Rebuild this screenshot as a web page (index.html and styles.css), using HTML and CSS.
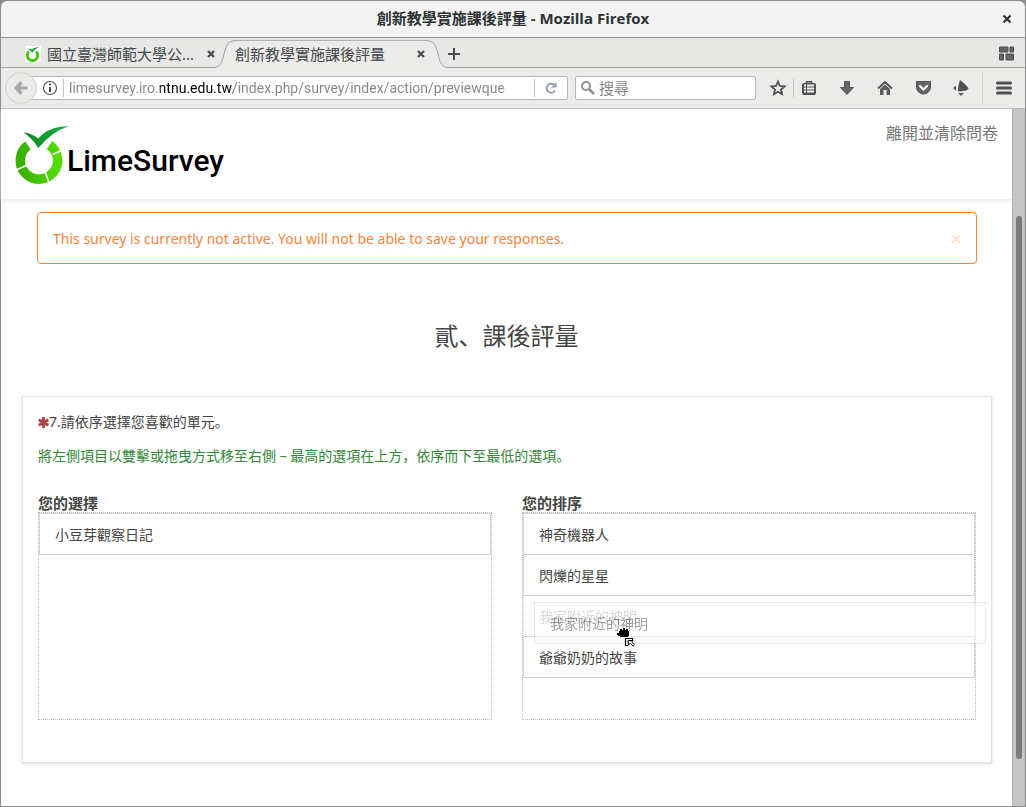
FILE: index.html
```html
<!DOCTYPE html>
<html lang="zh">
<head>
<meta charset="utf-8">
<title>創新教學實施課後評量</title>
<link rel="stylesheet" href="styles.css">
</head>
<body>
<div class="window">
  <header class="titlebar">
    <span class="titlebar-text">創新教學實施課後評量 - Mozilla Firefox</span>
    <button class="window-close" aria-label="關閉視窗"><svg width="10" height="10" viewBox="0 0 10 10"><path d="M1.500 1.500L8.500 8.500M8.500 1.500L1.500 8.500" stroke="#2e3436" stroke-width="2.200"/></svg></button>
  </header>

  <nav class="tabstrip" aria-label="分頁">
    <div class="tab">
      <svg class="favicon" width="16" height="16" viewBox="0 0 16 16"><rect width="16" height="16" fill="#fff"/><path d="M4 5.500A5.200 5.200 0 1 0 11 5.500" fill="none" stroke="#3fc400" stroke-width="2.700"/><path d="M2.500 2.500L7.500 6.500Q10 2 15 1Q9 1 7 3.500Z" fill="#149a3c"/></svg>
      <span class="tab-title">國立臺灣師範大學公...</span>
      <button class="tab-close" aria-label="關閉分頁"><svg width="8" height="8" viewBox="0 0 8 8"><path d="M1 1L7 7M7 1L1 7" stroke="#4a4d4e" stroke-width="2.200"/></svg></button>
    </div>
    <div class="tab-active">
      <svg class="tab-edge" width="24" height="30" viewBox="0 0 24 30"><path d="M0 29.500C6 29.500 8 27 10 20C13 9 13 2.500 24 2.500V30H0Z" fill="#ebebe9"/><path d="M0 29.500C6 29.500 8 27 10 20C13 9 13 2.500 24 2.500" fill="none" stroke="#a0a4ab"/></svg>
      <div class="tab-body">
        <span class="tab-title">創新教學實施課後評量</span>
        <button class="tab-close" aria-label="關閉分頁"><svg width="8" height="8" viewBox="0 0 8 8"><path d="M1 1L7 7M7 1L1 7" stroke="#4a4d4e" stroke-width="2.200"/></svg></button>
      </div>
      <svg class="tab-edge" width="24" height="30" viewBox="0 0 24 30"><path d="M24 29.500C18 29.500 16 27 14 20C11 9 11 2.500 0 2.500V30H24Z" fill="#ebebe9"/><path d="M24 29.500C18 29.500 16 27 14 20C11 9 11 2.500 0 2.500" fill="none" stroke="#a0a4ab"/></svg>
    </div>
    <button class="icon-new" aria-label="新分頁"><svg width="12" height="12" viewBox="0 0 12 12"><path d="M6 0V12M0 6H12" stroke="#4a4d4e" stroke-width="2"/></svg></button>
    <button class="icon-groups" aria-label="分頁群組"><svg width="15" height="15" viewBox="0 0 15 15"><path d="M.500 1H9V6H.500ZM11 1H14.500V6H11ZM.500 8H4.500V14H.500ZM7 8H14.500V14H7Z" fill="#666" stroke="#4c4c4c"/></svg></button>
  </nav>

  <div class="toolbar">
    <div class="location">
      <button class="back" aria-label="上一頁"><svg width="14" height="14" viewBox="0 0 14 14"><path d="M7.500 1.500L2 7L7.500 12.500M3 7H13.500" fill="none" stroke="#a6a6a6" stroke-width="3.200"/></svg></button>
      <div class="url-field">
        <svg width="16" height="16" viewBox="0 0 16 16"><circle cx="8" cy="8" r="6.500" fill="none" stroke="#5a5a5a" stroke-width="1.200"/><path d="M8 3.800V5.600M8 7V12" stroke="#4a4a4a" stroke-width="2"/></svg>
        <span class="rule"></span>
        <input class="url" type="text" aria-label="網址" value="limesurvey.iro.ntnu.edu.tw/index.php/survey/index/action/previewque">
        <span class="rule"></span>
        <button class="reload" aria-label="重新載入"><svg width="14" height="14" viewBox="0 0 14 14"><path d="M10.800 9.800A4.500 4.500 0 1 1 10.200 4" fill="none" stroke="#93a1b1" stroke-width="2"/><path d="M12.500 1V6.500H7Z" fill="#93a1b1"/></svg></button>
      </div>
    </div>
    <div class="search">
      <svg width="16" height="16" viewBox="0 0 16 16"><circle cx="6" cy="6" r="4" fill="none" stroke="#929292" stroke-width="2"/><path d="M9 9L14 14" stroke="#929292" stroke-width="2.800"/></svg>
      <input class="search-input" type="text" aria-label="搜尋" placeholder="搜尋">
    </div>
    <div class="tools">
      <button class="tool-star" aria-label="書籤"><svg width="18" height="18" viewBox="0 0 18 18"><path d="M9 2.500L10.900 7L15.600 7.400L12 10.500L13.100 15.200L9 12.700L4.900 15.200L6 10.500L2.400 7.400L7.100 7Z" fill="none" stroke="#505050" stroke-width="1.800"/></svg></button>
      <span class="rule"></span>
      <button class="tool" aria-label="書籤清單"><svg width="16" height="16" viewBox="0 0 16 16"><path d="M5.500 3V1.700H10.500V3" fill="none" stroke="#505050" stroke-width="1.600"/><rect x="2" y="4" width="12" height="10" rx="1" fill="#505050" stroke="#505050" stroke-width="2"/><path d="M3 5.500H5M6 5.500H13M3 8.500H5M6 8.500H13M3 11.500H5M6 11.500H13" stroke="#f4f4f4" stroke-width="1.800"/></svg></button>
      <button class="tool" aria-label="下載"><svg width="16" height="16" viewBox="0 0 16 16"><path d="M5.500 1.500H10.500V7.500H14.500L8 14.500L1.500 7.500H5.500Z" fill="#666" stroke="#505050" stroke-linejoin="round"/></svg></button>
      <button class="tool" aria-label="首頁"><svg width="16" height="16" viewBox="0 0 16 16"><path d="M1 8.500L8 2L15 8.500" fill="none" stroke="#505050" stroke-width="1.800"/><path d="M3 9L8 4.500L13 9V15H9.500V10H6.500V15H3Z" fill="#5d5d5d"/></svg></button>
      <button class="tool" aria-label="Pocket"><svg width="17" height="16" viewBox="0 0 17 16"><path d="M1.500 1.500H15.500V7A7 7 0 0 1 1.500 7Z" fill="#666" stroke="#505050"/><path d="M5 6L8.500 9.500L12 6" fill="none" stroke="#fff" stroke-width="2" stroke-linecap="round"/></svg></button>
      <button class="tool" aria-label="附加元件"><svg width="18" height="18" viewBox="0 0 18 18"><path d="M8 1Q12 4 16.500 9Q17 12 6.500 12.500Q5 10 8 1Z" fill="#505050"/><path d="M1 9L4 6.500V12ZM6 14H12L9 17Z" fill="#606060"/></svg></button>
      <span class="rule-tall"></span>
      <button class="tool" aria-label="選單"><svg width="16" height="14" viewBox="0 0 16 14"><path d="M1.500 2H14.500M1.500 7H14.500M1.500 12H14.500" stroke="#505050" stroke-width="3" stroke-linecap="round"/></svg></button>
    </div>
  </div>

  <div class="viewport">
    <main class="page">
      <div class="survey-nav">
        <svg class="logo" width="212" height="60" viewBox="0 0 212 60" role="img" aria-label="LimeSurvey">
          <defs>
            <linearGradient id="ring"><stop offset="0" stop-color="#38b000"/><stop offset="1" stop-color="#54dc00"/></linearGradient>
            <linearGradient id="leaf"><stop offset="0" stop-color="#108a1c"/><stop offset="1" stop-color="#1aad4d"/></linearGradient>
          </defs>
          <path d="M14 19.300A18.700 18.700 0 1 0 35.500 19" fill="none" stroke="url(#ring)" stroke-width="9.500"/>
          <path d="M2 43.900L13 39.200M35.500 58L31.200 46M38.500 28.600L49 24" stroke="#fff" stroke-width="1.600"/>
          <path d="M9.300 6.300Q18 7.500 24.500 12.500Q34 .500 54.700 .300Q38 5.500 24.300 22Q18 12 9.300 6.300Z" fill="url(#leaf)"/>
          <text class="logo-text" x="53" y="45">LimeSurvey</text>
        </svg>
        <a class="exit" href="#">離開並清除問卷</a>
      </div>
      <div class="alert" role="alert">
        <span>This survey is currently not active. You will not be able to save your responses.</span>
        <button class="alert-close" aria-label="關閉"><svg width="10" height="10" viewBox="0 0 10 10"><path d="M1 1L9 9M9 1L1 9" stroke="#fde3d0" stroke-width="2.200"/></svg></button>
      </div>
      <h1 class="group-title">貳、課後評量</h1>
      <section class="question">
        <p class="question-text"><svg class="required" width="11" height="11" viewBox="0 0 11 11"><path d="M5.500 0V11M.700 2.700L10.300 8.300M10.300 2.700L.700 8.300" stroke="#ab4642" stroke-width="2.800"/></svg>7.請依序選擇您喜歡的單元。</p>
        <p class="question-help">將左側項目以雙擊或拖曳方式移至右側 – 最高的選項在上方，依序而下至最低的選項。</p>
        <div class="ranking">
          <div class="column">
            <h2 class="column-title">您的選擇</h2>
            <ul class="list">
              <li class="item">小豆芽觀察日記</li>
            </ul>
          </div>
          <div class="column">
            <h2 class="column-title">您的排序</h2>
            <ul class="list">
              <li class="item">神奇機器人</li>
              <li class="item">閃爍的星星</li>
              <li class="slot">
                <div class="item placeholder">我家附近的神明</div>
                <div class="item dragged">我家附近的神明</div>
                <svg class="cursor" width="20" height="20" viewBox="0 0 20 20"><path d="M0 5H2V3H3V1H5V2H6V0H8V2H9V1H11V3H12V8H11V9H3V8H1V7H0Z" fill="#000"/><path d="M8.500 10.500H15.500V17.500H8.500Z" fill="#fff"/><path d="M15.500 12V10.500H8.500V17.500H11" fill="none" stroke="#000" stroke-width="1.200"/><path d="M11 12.500H16L14.700 14L17.500 16.800L16.100 18.200L13.300 15.400L11.500 17Z" fill="#fff" stroke="#000"/></svg>
              </li>
              <li class="item">爺爺奶奶的故事</li>
            </ul>
          </div>
        </div>
      </section>
    </main>
    <div class="scrollbar"><div class="thumb"></div></div>
  </div>
</div>
</body>
</html>
```
FILE: styles.css
```css
* { box-sizing: border-box; }

body {
  margin: 0;
  padding: 1px;
  background: #8c8c8c;
  color: #444;
  font-family: "Noto Sans", "Noto Sans CJK SC", sans-serif;
  font-size: 14px;
}

button {
  display: flex;
  align-items: center;
  justify-content: center;
  padding: 0;
  border: 0;
  background: none;
}

svg { display: block; flex: none; }

.window {
  display: flex;
  flex-direction: column;
  min-height: calc(100vh - 2px);
}

.titlebar {
  display: grid;
  grid-template-columns: 36px 1fr 36px;
  height: 37px;
  border-bottom: 1px solid #8f8f8c;
  border-radius: 6px 6px 0 0;
  background: #f3f3f3;
}

.titlebar-text {
  grid-column: 2;
  align-self: center;
  color: #2e3436;
  font-family: "Open Sans", "Noto Sans CJK TC", sans-serif;
  font-size: 15px;
  font-weight: 700;
  line-height: 20px;
  padding-bottom: 2px;
  text-align: center;
}

.tabstrip {
  display: flex;
  height: 30px;
  background: linear-gradient(#a2a2a0, #a2a2a0) bottom / 100% 1px no-repeat #e7e7e5;
}

.tab {
  display: flex;
  align-items: center;
  width: 212px;
  padding-top: 1px;
  padding-left: 24px;
}

.tab-title {
  flex: 1;
  margin-left: 6px;
  color: #42474a;
  font-size: 15px;
  line-height: 24px;
  white-space: nowrap;
}

.tab-close { width: 16px; height: 16px; }
.tab .tab-close { margin-right: -6px; }

.tab-active {
  display: flex;
  width: 236px;
}

.tab-body {
  display: flex;
  flex: 1;
  align-items: center;
  margin-top: 2px;
  padding-bottom: 2px;
  border-top: 1px solid #b0b3b8;
  background: #ebebe9;
}

.tab-body .tab-title { margin-left: -2px; }
.tab-body .tab-close { margin-right: -4px; }

.icon-new { width: 12px; margin-left: -1px; padding-top: 2px; }

.icon-groups {
  width: 15px;
  margin-right: 11px;
  margin-left: auto;
}

.toolbar {
  display: flex;
  align-items: center;
  height: 41px;
  padding: 0 2px 0 4px;
  border-bottom: 1px solid #b4b4b1;
  background: #ebebe9;
}

.location {
  display: flex;
  flex: 1;
  align-items: center;
  min-width: 0;
}

.back {
  z-index: 1;
  flex: none;
  width: 32px;
  height: 32px;
  margin-right: -14px;
  border: 1px solid #cfcfcc;
  border-radius: 50%;
  background: #ebebe9;
}

.url-field {
  display: flex;
  flex: 1;
  align-items: center;
  min-width: 0;
  height: 24px;
  padding-left: 18px;
  border: 1px solid #b6b6b3;
  border-radius: 2px;
  background: #fff;
}

.rule {
  flex: none;
  width: 1px;
  height: 18px;
  background: #c4c4c2;
}

.url-field svg + .rule { margin-left: 5px; }

.url {
  flex: 1;
  min-width: 0;
  height: 22px;
  margin: 0 24px 0 5px;
  padding: 0;
  border: 0;
  background: linear-gradient(90deg, #858585 91px, #000 91px, #000 164px, #858585 164px, #858585 98%, transparent);
  background-clip: text;
  color: transparent;
  font-family: Roboto, sans-serif;
  font-size: 14px;
}

.reload { width: 32px; height: 22px; }

.search {
  display: flex;
  align-items: center;
  width: 181px;
  height: 24px;
  margin-left: 7px;
  padding-left: 4px;
  border: 1px solid #b6b6b3;
  border-radius: 2px;
  background: #fff;
}

.search-input {
  width: 100%;
  margin-left: 3px;
  padding: 0;
  border: 0;
  background: none;
  font-family: "Noto Sans", "Noto Sans CJK TC", sans-serif;
  font-size: 15px;
  line-height: 20px;
}

.search-input::placeholder { color: #858585; }

.tools {
  display: flex;
  align-items: center;
  padding-left: 6px;
}

.tool-star { width: 31px; height: 32px; }
.tool-star + .rule { margin-right: -4px; }
.tool { width: 38px; height: 32px; }

.rule-tall {
  width: 1px;
  height: 32px;
  margin: 0 2px;
  background: #d8d8d5;
}

.viewport {
  display: flex;
  flex: 1;
}

.page {
  flex: 1;
  padding-bottom: 42px;
  background: #fff;
}

.survey-nav {
  display: flex;
  align-items: flex-start;
  justify-content: space-between;
  height: 90px;
  padding: 14px 14px 0 13px;
  box-shadow: 0 1px 4px #e4e4e4;
}

.logo { overflow: visible; margin-top: 3px; }

.logo-text {
  fill: #000;
  font-family: Roboto, sans-serif;
  font-size: 30px;
  font-weight: 500;
}

.exit {
  color: #777;
  font-size: 16px;
  line-height: 20px;
  text-decoration: none;
}

.alert {
  display: flex;
  align-items: center;
  justify-content: space-between;
  min-height: 52px;
  margin: 13px 35px 0 36px;
  padding: 1px 15px 0;
  border: 1px solid #f7853c;
  border-radius: 4px;
  color: #f7853c;
  line-height: 21px;
}

.group-title {
  margin: 55px 0 0;
  font-size: 24px;
  font-weight: 400;
  line-height: 34px;
  text-align: center;
}

.question {
  margin: 43px 20px 0 21px;
  padding: 15px 15px 42px;
  border: 1px solid #e3e3e3;
  box-shadow: 0 1px 3px #ddd;
}

.question-text,
.question-help {
  margin: 0;
  line-height: 20px;
}

.question-text { display: flex; align-items: center; }
.question-help { margin-top: 14px; color: #328637; }

.ranking {
  display: grid;
  grid-template-columns: 1fr 1fr;
  gap: 30px;
  margin-top: 28px;
}

.column-title {
  margin: 0;
  font-size: 15px;
  font-weight: 700;
  line-height: 18px;
}

.list {
  min-height: 208px;
  margin: 0;
  padding: 0;
  border: 1px dotted #bbb;
  list-style: none;
}

.item {
  height: 42px;
  padding: 11px 15px 9px;
  border: 1px solid #d3d3d3;
  background: #fff;
  line-height: 20px;
}

.item + .item,
.slot,
.slot + .item { margin-top: -1px; }

.slot { position: relative; }
.slot .item { margin-top: 0; }
.placeholder { opacity: .4; }

.dragged {
  position: absolute;
  top: 7px;
  left: 11px;
  z-index: 2;
  width: 100%;
  opacity: .5;
}

.cursor {
  position: absolute;
  top: 33px;
  left: 94px;
  z-index: 3;
}

.scrollbar {
  display: flex;
  width: 13px;
  padding: 107px 3px 47px;
  border-left: 1px solid #b5b7b6;
  background: #c4c6c5;
}

.thumb {
  flex: 1;
  border-radius: 3px;
  background: #777b7c;
}
```
